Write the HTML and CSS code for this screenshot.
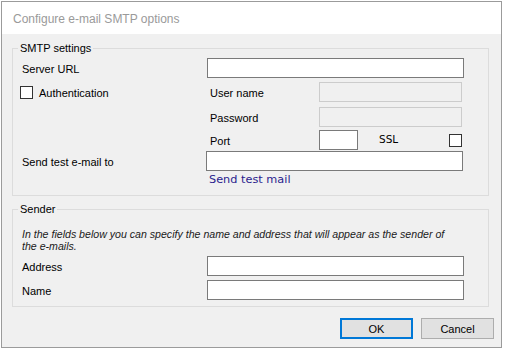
FILE: index.html
```html
<!DOCTYPE html>
<html lang="en">
<head>
    <meta charset="UTF-8">
    <title>Configure e-mail SMTP options</title>
    <link rel="stylesheet" href="styles.css">
</head>
<body>

    <div class="window">
        <div class="titlebar">Configure e-mail SMTP options</div>

        <div class="dialog-body">
            <fieldset class="group smtp">
                <legend>SMTP settings</legend>

                <div class="row row-server">
                    <label class="label col-main">Server URL</label>
                    <input class="field field-wide" type="text">
                </div>

                <div class="row row-user">
                    <label class="check-label col-check">
                        <input class="check" type="checkbox">
                        <span>Authentication</span>
                    </label>
                    <label class="label col-sub">User name</label>
                    <input class="field field-auth" type="text" disabled>
                </div>

                <div class="row row-pass">
                    <span class="col-check"></span>
                    <label class="label col-sub">Password</label>
                    <input class="field field-auth" type="password" disabled>
                </div>

                <div class="row row-port">
                    <span class="col-check"></span>
                    <label class="label col-sub">Port</label>
                    <input class="field field-port" type="text">
                    <label class="label label-ssl">SSL</label>
                    <input class="check" type="checkbox">
                </div>

                <div class="row row-test">
                    <label class="label col-test">Send test e-mail to</label>
                    <input class="field field-wide" type="text">
                </div>

                <div class="row-link">
                    <a class="test-link" href="#">Send test mail</a>
                </div>
            </fieldset>

            <fieldset class="group sender">
                <legend>Sender</legend>

                <p class="hint">In the fields below you can specify the name and address that will appear as the sender of<br>the e-mails.</p>

                <div class="row row-address">
                    <label class="label col-main">Address</label>
                    <input class="field field-wide" type="text">
                </div>

                <div class="row row-name">
                    <label class="label col-main">Name</label>
                    <input class="field field-wide" type="text">
                </div>
            </fieldset>

            <div class="buttons">
                <button class="btn btn-default">OK</button>
                <button class="btn">Cancel</button>
            </div>
        </div>
    </div>

</body>
</html>
```

FILE: styles.css
```css
body {
    margin: 0;
    padding: 1px;
    background-color: #fff;
    font-family: "Liberation Sans", Arial, sans-serif;
    font-size: 11px;
    color: #000;
}
.window {
    box-sizing: border-box;
    width: 501px;
    height: 347px;
    border: 1px solid #9b9b9b;
    background-color: #f0f0f0;
    display: flex;
    flex-direction: column;
}
.titlebar {
    height: 32px;
    box-sizing: border-box;
    padding: 10px 0 0 11px;
    background-color: #fff;
    color: #9a9a9a;
    font-size: 12px;
    line-height: 14px;
}
.dialog-body {
    padding-top: 8px;
}
.group {
    margin: 0 12px 0 10px;
    padding: 3px 0 0 7px;
    border: 1px solid #dcdcdc;
    min-width: 0;
}
.group legend {
    margin-left: -2px;
    padding: 0 2px;
    line-height: 13px;
    height: 13px;
}
.smtp {
    padding-bottom: 9px;
}
.sender {
    margin-top: 7px;
    padding-bottom: 6px;
}
.row {
    display: flex;
    align-items: center;
    height: 20px;
}
.label {
    padding-left: 2px;
    padding-top: 2px;
    box-sizing: border-box;
    white-space: nowrap;
}
.col-main {
    width: 187px;
}
.col-test {
    width: 186px;
}
.col-check {
    width: 190px;
    flex-shrink: 0;
}
.col-sub {
    width: 109px;
    padding-left: 0;
}
.row-user {
    margin-top: 4px;
}
.row-pass {
    margin-top: 5px;
}
.row-port {
    margin-top: 3px;
}
.row-test {
    margin-top: 1px;
}
.field {
    box-sizing: border-box;
    height: 20px;
    margin: 0;
    padding: 0 3px;
    border: 1px solid #7a7a7a;
    background-color: #fff;
    font-family: inherit;
    font-size: 11px;
    outline: none;
}
.field-wide {
    width: 257px;
}
.field-auth {
    width: 143px;
}
.field-auth:disabled {
    border-color: #cccccc;
    background-color: #f0f0f0;
}
.field-port {
    width: 39px;
}
.label-ssl {
    width: 70px;
    margin-left: 21px;
    padding-left: 0;
    font-family: "DejaVu Sans", Verdana, sans-serif;
    font-size: 10.5px;
    padding-bottom: 4px;
}
.check {
    appearance: none;
    box-sizing: border-box;
    width: 13px;
    height: 13px;
    margin: 0;
    border: 1px solid #333;
    background-color: #fff;
}
.check-label {
    display: flex;
    align-items: center;
    gap: 6px;
}
.check-label span {
    padding-top: 2px;
}
.row-link {
    margin-top: 1px;
    padding-left: 189px;
    height: 14px;
    line-height: 14px;
}
.test-link {
    color: #2a1d8e;
    text-decoration: none;
    font-family: "DejaVu Sans", Verdana, sans-serif;
    font-size: 11.3px;
}
.hint {
    margin: 9px 0 4px 2px;
    font-style: italic;
    font-size: 10.6px;
    line-height: 12px;
    color: #1a1a1a;
}
.row-name {
    margin-top: 4px;
}
.buttons {
    display: flex;
    justify-content: flex-end;
    gap: 8px;
    margin-top: 11px;
    padding-right: 7px;
}
.btn {
    box-sizing: border-box;
    width: 73px;
    height: 21px;
    margin: 0;
    border: 1px solid #adadad;
    background-color: #e1e1e1;
    font-family: inherit;
    font-size: 11px;
    color: #000;
}
.btn-default {
    border: 2px solid #0078d7;
}
```
